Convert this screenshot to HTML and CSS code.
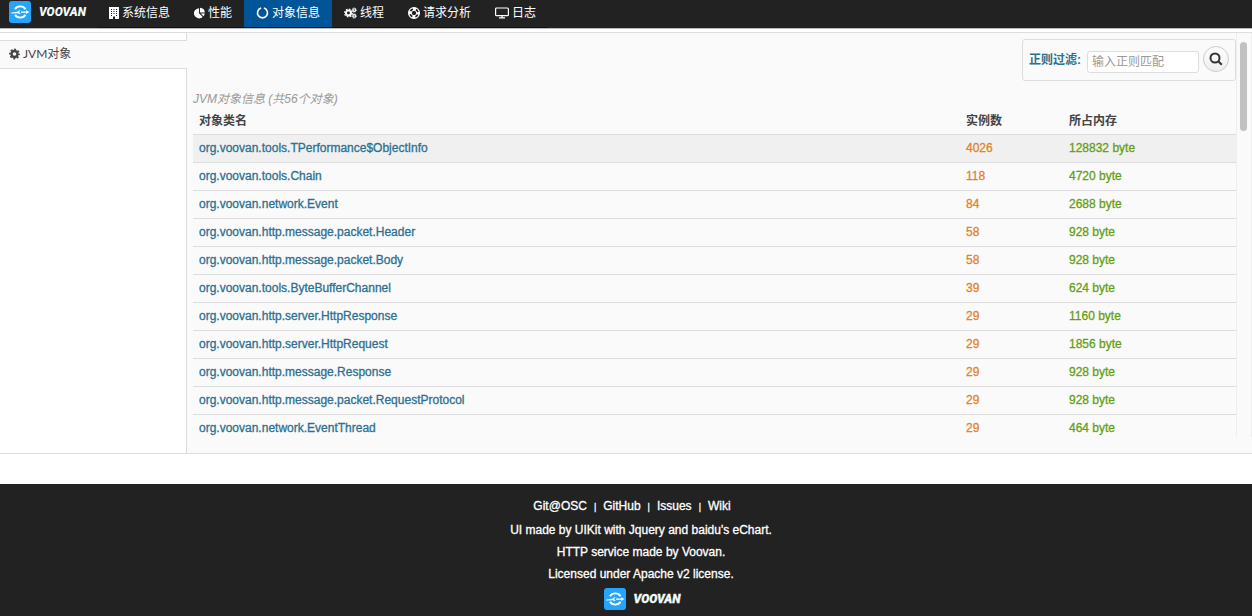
FILE: index.html
```
<!DOCTYPE html>
<html lang="zh-CN">
<head>
<meta charset="utf-8">
<title>Voovan</title>
<link rel="stylesheet" href="styles.css">
</head>
<body>
<svg class="defs" aria-hidden="true">
  <symbol id="logo" viewBox="0 0 22 22">
    <rect width="22" height="22" rx="3" fill="#24a4fa"/>
    <path d="M6 8.200A6 5.500 0 0 1 16.500 8.200M6 13.800A6 5.500 0 0 0 16.500 13.800" fill="none" stroke="#fff" stroke-width="1.900"/>
    <path d="M2 11.800l7-1.300q1-1.800 2.600-1.200l-1.500 1.700 1.500 1.800q-1.700.6-2.600-.6L2 12.600z" fill="#fff"/>
    <path d="M12 10.600h5.200V9.200l3.200 1.900-3.200 1.900v-1.300H12z" fill="#fff"/>
  </symbol>
</svg>
<header class="topbar">
  <a class="brand" href="#"><svg class="logo"><use href="#logo"/></svg><span class="wordmark">VOOVAN</span></a>
  <nav class="nav">
    <a class="tab" href="#"><svg width="10" height="12" viewBox="0 0 10 12"><path fill="currentColor" fill-rule="evenodd" d="M0 0h10v12H6V9.500H4V12H0zM2 2v1h1V2zm2.500 0v1h1V2zM7 2v1h1V2zM2 4v1h1V4zm2.500 0v1h1V4zM7 4v1h1V4zM2 6v1h1V6zm2.500 0v1h1V6zM7 6v1h1V6zM2 8v1h1V8zm5 0v1h1V8z"/></svg>系统信息</a>
    <a class="tab" href="#"><svg width="11" height="12" viewBox="0 0 12 12"><path fill="currentColor" d="M5.400.7V6.300L9.500 10.300A5.600 5.600 0 1 1 5.400.7zM6.500.3A5.600 5.600 0 0 1 11.800 5.500H6.500zM7.300 6.500h4.500A5.500 5.500 0 0 1 10.300 9.500z"/></svg>性能</a>
    <a class="tab active" href="#" aria-current="page"><svg width="13" height="12" viewBox="0 0 13 12"><path fill="none" stroke="currentColor" stroke-width="1.600" d="M5.100 1.100a5 5 0 1 0 2.800 0"/></svg>对象信息</a>
    <a class="tab" href="#"><svg width="13" height="12" viewBox="0 0 14 12"><g fill="none" stroke="currentColor"><circle cx="4.800" cy="6" r="2.700" stroke-width="2.200"/><circle cx="4.800" cy="6" r="4.100" stroke-width="1.400" stroke-dasharray="1.700 1.520"/><circle cx="11" cy="2.800" r="1.400" stroke-width="1.300"/><circle cx="11" cy="2.800" r="2.300" stroke-width="1" stroke-dasharray="1 .8"/><circle cx="11" cy="9.200" r="1.400" stroke-width="1.300"/><circle cx="11" cy="9.200" r="2.300" stroke-width="1" stroke-dasharray="1 .8"/></g></svg>线程</a>
    <a class="tab" href="#"><svg width="12" height="12" viewBox="0 0 12 12"><g fill="none" stroke="currentColor"><circle cx="6" cy="6" r="5.400" stroke-width="1.200"/><circle cx="6" cy="6" r="2.700" stroke-width="1"/><circle cx="6" cy="6" r="4.100" stroke-width="2.700" stroke-dasharray="3.220 3.220" stroke-dashoffset="1.610"/></g></svg>请求分析</a>
    <a class="tab" href="#"><svg width="14" height="12" viewBox="0 0 14 12"><path fill="none" stroke="currentColor" stroke-width="1.200" d="M1.500 1h11q.9 0 .9.900v5.800q0 .9-.9.900h-11q-.9 0-.9-.9V1.900Q.6 1 1.500 1zM7 8.500v2M4 10.900h6"/></svg>日志</a>
  </nav>
</header>
<main class="workspace">
  <aside class="sidebar">
    <a class="side-item" href="#"><svg width="11" height="12" viewBox="0 0 12 12"><g fill="none" stroke="currentColor"><circle cx="6" cy="6" r="3.300" stroke-width="2.600"/><circle cx="6" cy="6" r="5" stroke-width="1.800" stroke-dasharray="2.100 1.827" stroke-dashoffset="1"/></g></svg>JVM对象</a>
  </aside>
  <section class="panel">
    <div class="content">
      <form class="filter">
        <label for="filter">正则过滤:</label>
        <input id="filter" type="text" placeholder="输入正则匹配">
        <button type="button" aria-label="搜索"><svg width="14" height="14" viewBox="0 0 14 14"><g fill="none" stroke="#333" stroke-width="2"><circle cx="6" cy="6" r="4.500"/><path d="M9.300 9.300l3.500 3.500"/></g></svg></button>
      </form>
      <table class="objects">
        <caption>JVM对象信息 (共56个对象)</caption>
        <thead><tr><th>对象类名</th><th class="count">实例数</th><th class="memory">所占内存</th></tr></thead>
        <tbody>
          <tr class="hover"><td>org.voovan.tools.TPerformance$ObjectInfo</td><td>4026</td><td>128832 byte</td></tr>
          <tr><td>org.voovan.tools.Chain</td><td>118</td><td>4720 byte</td></tr>
          <tr><td>org.voovan.network.Event</td><td>84</td><td>2688 byte</td></tr>
          <tr><td>org.voovan.http.message.packet.Header</td><td>58</td><td>928 byte</td></tr>
          <tr><td>org.voovan.http.message.packet.Body</td><td>58</td><td>928 byte</td></tr>
          <tr><td>org.voovan.tools.ByteBufferChannel</td><td>39</td><td>624 byte</td></tr>
          <tr><td>org.voovan.http.server.HttpResponse</td><td>29</td><td>1160 byte</td></tr>
          <tr><td>org.voovan.http.server.HttpRequest</td><td>29</td><td>1856 byte</td></tr>
          <tr><td>org.voovan.http.message.Response</td><td>29</td><td>928 byte</td></tr>
          <tr><td>org.voovan.http.message.packet.RequestProtocol</td><td>29</td><td>928 byte</td></tr>
          <tr><td>org.voovan.network.EventThread</td><td>29</td><td>464 byte</td></tr>
        </tbody>
      </table>
    </div>
    <div class="track"><div class="thumb"></div></div>
  </section>
</main>
<footer class="footer">
  <ul class="links"><li><a href="#">Git@OSC</a></li><li><a href="#">GitHub</a></li><li><a href="#">Issues</a></li><li><a href="#">Wiki</a></li></ul>
  <p>UI made by UIKit with Jquery and baidu's eChart.</p>
  <p>HTTP service made by Voovan.</p>
  <p>Licensed under Apache v2 license.</p>
  <a class="brand" href="#"><svg class="logo"><use href="#logo"/></svg><span class="wordmark">VOOVAN</span></a>
</footer>
</body>
</html>
```

FILE: styles.css
```
* { box-sizing: border-box; }
html { height: 100%; }
body {
  display: flex;
  flex-direction: column;
  min-height: 100%;
  margin: 0;
  background: #fff;
  color: #444;
  font: 12px/20px "Liberation Sans", "Noto Sans CJK SC", sans-serif;
}
a { color: inherit; text-decoration: none; }
svg { flex: none; }
.defs { position: absolute; width: 0; height: 0; }

.topbar {
  display: flex;
  height: 29px;
  background: #222;
  border-bottom: 1px solid #bbb;
  color: #fff;
}
.brand { display: flex; align-items: center; gap: 8px; }
.topbar .brand { width: 97px; padding: 0 0 4px 9px; }
.logo { width: 22px; height: 22px; }
.wordmark {
  color: #f1fbf8;
  font: italic 900 12px/22px Roboto, sans-serif;
}
.nav { display: flex; }
.tab {
  display: flex;
  align-items: center;
  gap: 3px;
  padding: 0 12px 2px;
  border-bottom: 1px solid #111;
}
.active { background: #005599; }

.workspace {
  display: flex;
  height: 422px;
  margin-top: 3px;
  border: solid #ddd;
  border-width: 1px 0;
  background: #fafafa;
}
.sidebar {
  width: 187px;
  padding-top: 7px;
  background: linear-gradient(#ddd, #ddd) right / 1px 100% no-repeat #fff;
}
.side-item {
  display: flex;
  align-items: center;
  gap: 3px;
  height: 29px;
  padding: 0 0 2px 9px;
  border: solid #ddd;
  border-width: 1px 0;
  background: #fafafa;
  font-family: Lato, "Noto Sans CJK SC", sans-serif;
}
.panel { display: flex; flex: 1; height: 404px; min-width: 0; padding-left: 6px; }
.content {
  flex: 1;
  padding-top: 6px;
  overflow: hidden;
  border-right: 1px solid #eee;
}
.track { width: 15px; padding: 9px 4px 0 3px; border-right: 1px solid #eee; }
.thumb { height: 89px; border-radius: 4px; background: #c1c1c1; }

.filter {
  display: flex;
  align-items: center;
  width: 214px;
  height: 42px;
  margin-left: auto;
  padding: 0 6px;
  border: 1px solid #ddd;
  border-radius: 3px;
}
.filter label { color: #2d7091; font-weight: bold; }
.filter input {
  flex: 1;
  min-width: 0;
  height: 22px;
  margin: 3px 4px 0 6px;
  padding: 0 4px;
  border: 1px solid #ddd;
  border-radius: 3px;
  background: #fff;
  font: inherit;
}
.filter input::placeholder { color: #999; }
.filter button {
  display: grid;
  place-items: center;
  width: 26px;
  height: 26px;
  margin-bottom: 2px;
  padding: 0;
  border: 1px solid #ccc;
  border-radius: 50%;
  background: linear-gradient(#fff, #eee);
}

.objects { width: 100%; margin-top: 8px; border-collapse: collapse; table-layout: fixed; }
.objects caption { color: #999; font-style: italic; text-align: left; }
.objects th, .objects td { height: 28px; padding: 0 6px; border-bottom: 1px solid #ddd; text-align: left; }
.objects th { height: 25px; }
.count { width: 103px; }
.memory { width: 173px; }
.objects td { color: #2d7091; -webkit-text-stroke: 0.3px; }
.objects td:nth-child(2) { color: #e28327; }
.objects td:nth-child(3) { color: #659f13; }
.objects tbody tr:last-child td { border-bottom: 0; }
.hover { background: #f0f0f0; }

.footer {
  display: flex;
  flex: 1;
  flex-direction: column;
  align-items: center;
  margin-top: 30px;
  padding-top: 11px;
  background: #222;
  color: #fff;
  line-height: 22px;
  -webkit-text-stroke: 0.3px;
}
.footer p { margin: 0; padding-left: 30px; }
.footer .brand { margin-top: 3px; padding-left: 32px; }
.links { display: flex; margin: 0; padding: 0 0 0 12px; list-style: none; line-height: 23px; }
.links li + li::before { content: "|"; margin: 0 7px; font-size: 9px; }
```
